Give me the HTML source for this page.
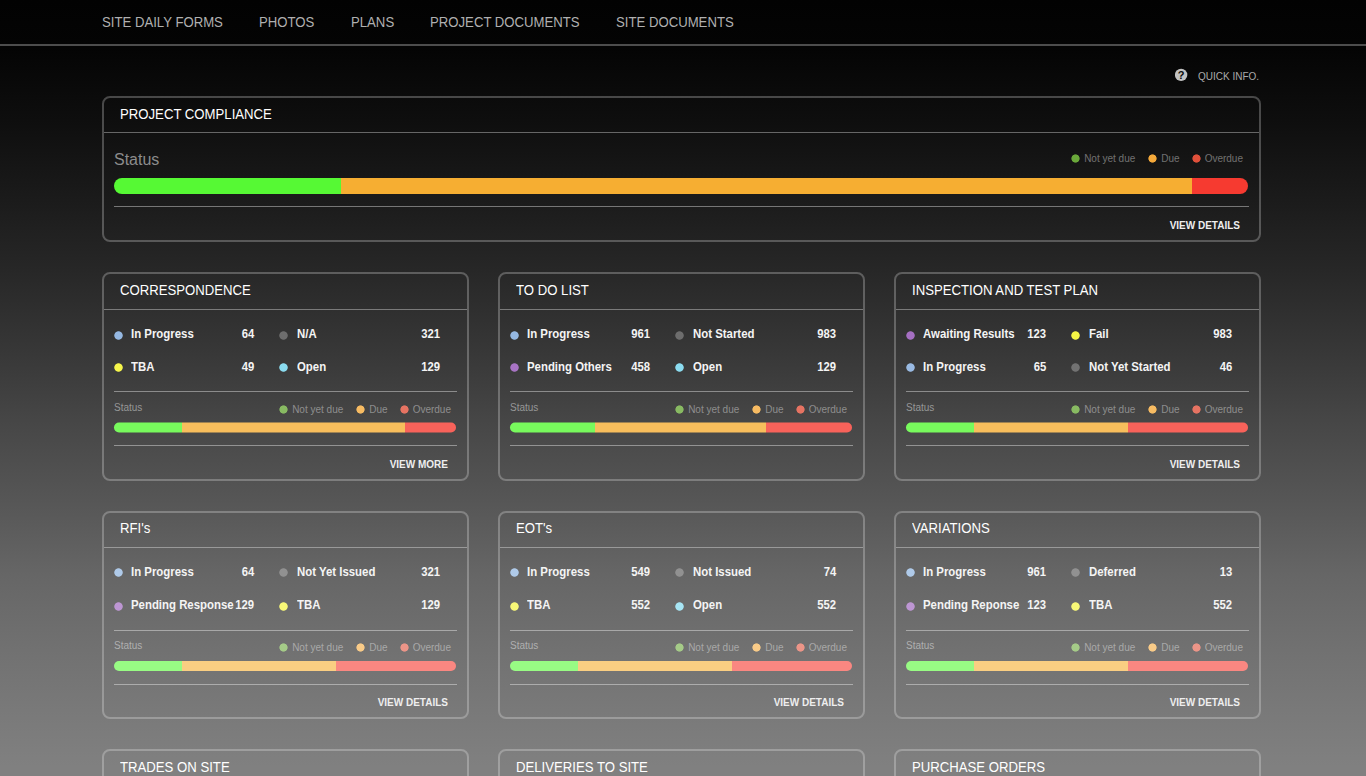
<!DOCTYPE html>
<html lang="en">
<head>
<meta charset="utf-8">
<title>Project Dashboard</title>
<style>
*{box-sizing:border-box;margin:0;padding:0}
html,body{width:1366px;height:776px;overflow:hidden}
body{font-family:"Liberation Sans",Arial,Helvetica,sans-serif;color:#fff;background:#000 linear-gradient(to bottom,#020202 0px,#040404 46px,#060606 60px,#0e0e0e 120px,#1b1b1b 200px,#272727 270px,#373737 350px,#474747 425px,#565656 500px,#666666 575px,#717171 650px,#797979 710px,#808080 766px,#808080 776px) no-repeat;position:relative}
ul{list-style:none}
h3{font-weight:normal}
nav{position:absolute;left:0;top:0;width:1366px;height:46px;border-bottom:2px solid #4d4d4d}
nav a{position:absolute;top:14px;font-size:14px;line-height:16px;color:#b0b0b0;white-space:nowrap;text-decoration:none;transform:scaleX(.94);transform-origin:0 50%}
.quick{position:absolute;left:1175px;top:68px;height:14px;font-size:10px;line-height:12px;color:#aaa;white-space:nowrap}
.quick svg{position:absolute;left:0;top:0}
.quick span{position:absolute;left:23px;top:3px}
.card{position:absolute;width:367px;border:2px solid rgba(255,255,255,.25);border-radius:8px}
.card.r0{height:209px}
.card.r1{height:208px}
.card.r2{height:60px}
.big{left:102px;top:96px;width:1159px;height:146px}
.big .hd{height:35px;padding-top:8px}
.hd{position:absolute;left:0;top:0;right:0;height:36px;border-bottom:1px solid rgba(255,255,255,.36);font-size:14px;line-height:16px;padding:8px 0 0 15.5px;color:#fff;white-space:nowrap}
.hd span{display:inline-block;transform:scaleX(.94);transform-origin:0 50%}
.r1 .hd{height:35px;padding-top:7px}
.it{position:absolute;font-size:12px;line-height:14px;height:14px;font-weight:bold;white-space:nowrap;color:#f4f4f4}
.i0{left:10px;top:53px;width:140px}
.i1{left:175px;top:53px;width:161px}
.i2{left:10px;top:86px;width:140px}
.i3{left:175px;top:86px;width:161px}
.r1 .i0,.r1 .i1{top:52px}
.r1 .i2,.r1 .i3{top:85px}
.dot{position:absolute;left:-1px;top:3px;width:11px;height:11px;background:radial-gradient(circle at 50% 50%,var(--c) 3.8px,transparent 4.6px)}
.lab{position:absolute;left:17px;top:0;transform:scaleX(.95);transform-origin:0 50%}
.i1 .lab,.i3 .lab{left:18px}
.num{position:absolute;right:0;top:0;transform:scaleX(.94);transform-origin:100% 50%}
.dot.b{--c:#8fb0dc}
.dot.g{--c:#727272}
.dot.y{--c:#f6f64a}
.dot.c{--c:#8adcf0}
.dot.p{--c:#a873c4}
.hr{position:absolute;left:10px;right:10px;height:1px;background:rgba(255,255,255,.4)}
.h1{top:117px}
.h2{top:171px}
.r1 .h1{top:117px}
.r1 .h2{top:171px}
.st{position:absolute;left:10px;top:128px;font-size:10px;line-height:12px;color:rgba(255,255,255,.45)}
.lg{position:absolute;right:16px;top:130px;font-size:10px;line-height:12px;color:rgba(255,255,255,.4);white-space:nowrap}
.lg span{margin-left:13px;position:relative;padding-left:13px;display:inline-block}
.lg span:last-child{margin-left:12px}
.lg .d{position:absolute;left:-1px;top:0px;width:11px;height:11px;background:radial-gradient(circle at 50% 50%,var(--c) 3.7px,transparent 4.5px)}
.dg{--c:#8fc25a}
.do{--c:#f5b350}
.dr{--c:#e46a5a}
.bar{position:absolute;left:10px;right:11px;top:148px;height:10px;transform:translateY(.5px);border-radius:5px}
.r1 .st{top:127px}
.r1 .lg{top:129px}
.r1 .bar{top:148px;transform:none}
.vd{position:absolute;right:19px;bottom:8px;font-size:10px;line-height:12px;font-weight:bold;color:#eee;white-space:nowrap}
/* big card */
.big .st{left:10px;top:53px;font-size:16px;line-height:18px;color:#8c8c8c}
.big .lg{right:16px;top:55px}
.big .lg .d{top:0px}
.big .bar{top:80px;height:16px;border-radius:8px;transform:none}
.big .h2{top:108px}
.big .dg{--c:#6fa83c}
.big .do{--c:#f5a93a}
.big .dr{--c:#d9523a}
.r0 .i2 .dot,.r0 .i3 .dot{top:2px}
.r1 .i0 .dot,.r1 .i1 .dot{top:2px}

</style>
</head>
<body>
<nav>
<a style="left:102px">SITE DAILY FORMS</a>
<a style="left:259px">PHOTOS</a>
<a style="left:351px">PLANS</a>
<a style="left:430px">PROJECT DOCUMENTS</a>
<a style="left:616px">SITE DOCUMENTS</a>
</nav>
<div class="quick"><svg width="14" height="14" viewBox="0 0 14 14"><circle cx="6.1" cy="6.9" r="6.2" fill="#c2c2c2"/><text x="6.1" y="10.9" text-anchor="middle" font-family="Liberation Sans,sans-serif" font-weight="bold" font-size="11" fill="#0a0a0a">?</text></svg><span>QUICK INFO.</span></div>
<section class="card big">
<h3 class="hd"><span>PROJECT COMPLIANCE</span></h3>
<div class="st">Status</div>
<div class="lg"><span><i class="d" style="--c:#6aa83a"></i>Not yet due</span><span><i class="d" style="--c:#f5a93a"></i>Due</span><span><i class="d" style="--c:#e0503a"></i>Overdue</span></div>
<div class="bar" style="background:linear-gradient(to right,#56f934 20%,#f6ae32 20% 95.05%,#f63a30 95.05%)"></div>
<div class="hr h2"></div>
<a class="vd">VIEW DETAILS</a>
</section>
<section class="card r0" style="left:102px;top:272px">
<h3 class="hd"><span>CORRESPONDENCE</span></h3>
<ul class="items">
<li class="it i0"><i class="dot" style="--c:#95b8e2"></i><span class="lab">In Progress</span><span class="num">64</span></li>
<li class="it i1"><i class="dot" style="--c:#6d6d6d"></i><span class="lab">N/A</span><span class="num">321</span></li>
<li class="it i2"><i class="dot" style="--c:#f6f64b"></i><span class="lab">TBA</span><span class="num">49</span></li>
<li class="it i3"><i class="dot" style="--c:#8bdcf0"></i><span class="lab">Open</span><span class="num">129</span></li>
</ul>
<div class="hr h1"></div>
<div class="st">Status</div>
<div class="lg"><span><i class="d" style="--c:#88ba62"></i>Not yet due</span><span><i class="d" style="--c:#f7bb62"></i>Due</span><span><i class="d" style="--c:#e67362"></i>Overdue</span></div>
<div class="bar" style="background:linear-gradient(to right,#78fa5d 20%,#f8be5c 20% 85%,#f8625a 85%)"></div>
<div class="hr h2"></div>
<a class="vd">VIEW MORE</a>
</section>
<section class="card r0" style="left:498px;top:272px">
<h3 class="hd"><span>TO DO LIST</span></h3>
<ul class="items">
<li class="it i0"><i class="dot" style="--c:#95b8e2"></i><span class="lab">In Progress</span><span class="num">961</span></li>
<li class="it i1"><i class="dot" style="--c:#6d6d6d"></i><span class="lab">Not Started</span><span class="num">983</span></li>
<li class="it i2"><i class="dot" style="--c:#a874c4"></i><span class="lab">Pending Others</span><span class="num">458</span></li>
<li class="it i3"><i class="dot" style="--c:#8bdcf0"></i><span class="lab">Open</span><span class="num">129</span></li>
</ul>
<div class="hr h1"></div>
<div class="st">Status</div>
<div class="lg"><span><i class="d" style="--c:#88ba62"></i>Not yet due</span><span><i class="d" style="--c:#f7bb62"></i>Due</span><span><i class="d" style="--c:#e67362"></i>Overdue</span></div>
<div class="bar" style="background:linear-gradient(to right,#78fa5d 25%,#f8be5c 25% 75%,#f8625a 75%)"></div>
<div class="hr h2"></div>
</section>
<section class="card r0" style="left:894px;top:272px">
<h3 class="hd"><span>INSPECTION AND TEST PLAN</span></h3>
<ul class="items">
<li class="it i0"><i class="dot" style="--c:#a56fc2"></i><span class="lab">Awaiting Results</span><span class="num">123</span></li>
<li class="it i1"><i class="dot" style="--c:#f5f545"></i><span class="lab">Fail</span><span class="num">983</span></li>
<li class="it i2"><i class="dot" style="--c:#99bae3"></i><span class="lab">In Progress</span><span class="num">65</span></li>
<li class="it i3"><i class="dot" style="--c:#727272"></i><span class="lab">Not Yet Started</span><span class="num">46</span></li>
</ul>
<div class="hr h1"></div>
<div class="st">Status</div>
<div class="lg"><span><i class="d" style="--c:#88ba62"></i>Not yet due</span><span><i class="d" style="--c:#f7bb62"></i>Due</span><span><i class="d" style="--c:#e67362"></i>Overdue</span></div>
<div class="bar" style="background:linear-gradient(to right,#78fa5d 20%,#f8be5c 20% 65%,#f8625a 65%)"></div>
<div class="hr h2"></div>
<a class="vd">VIEW DETAILS</a>
</section>
<section class="card r1" style="left:102px;top:511px">
<h3 class="hd"><span>RFI's</span></h3>
<ul class="items">
<li class="it i0"><i class="dot" style="--c:#afcae9"></i><span class="lab">In Progress</span><span class="num">64</span></li>
<li class="it i1"><i class="dot" style="--c:#919191"></i><span class="lab">Not Yet Issued</span><span class="num">321</span></li>
<li class="it i2"><i class="dot" style="--c:#bd96d3"></i><span class="lab">Pending Response</span><span class="num">129</span></li>
<li class="it i3"><i class="dot" style="--c:#f8f877"></i><span class="lab">TBA</span><span class="num">129</span></li>
</ul>
<div class="hr h1"></div>
<div class="st">Status</div>
<div class="lg"><span><i class="d" style="--c:#a5cb88"></i>Not yet due</span><span><i class="d" style="--c:#f9cb88"></i>Due</span><span><i class="d" style="--c:#ec9588"></i>Overdue</span></div>
<div class="bar" style="background:linear-gradient(to right,#98fb84 20%,#face82 20% 65%,#fa8781 65%)"></div>
<div class="hr h2"></div>
<a class="vd">VIEW DETAILS</a>
</section>
<section class="card r1" style="left:498px;top:511px">
<h3 class="hd"><span>EOT's</span></h3>
<ul class="items">
<li class="it i0"><i class="dot" style="--c:#afcae9"></i><span class="lab">In Progress</span><span class="num">549</span></li>
<li class="it i1"><i class="dot" style="--c:#919191"></i><span class="lab">Not Issued</span><span class="num">74</span></li>
<li class="it i2"><i class="dot" style="--c:#f8f877"></i><span class="lab">TBA</span><span class="num">552</span></li>
<li class="it i3"><i class="dot" style="--c:#a7e5f4"></i><span class="lab">Open</span><span class="num">552</span></li>
</ul>
<div class="hr h1"></div>
<div class="st">Status</div>
<div class="lg"><span><i class="d" style="--c:#a5cb88"></i>Not yet due</span><span><i class="d" style="--c:#f9cb88"></i>Due</span><span><i class="d" style="--c:#ec9588"></i>Overdue</span></div>
<div class="bar" style="background:linear-gradient(to right,#98fb84 20%,#face82 20% 65%,#fa8781 65%)"></div>
<div class="hr h2"></div>
<a class="vd">VIEW DETAILS</a>
</section>
<section class="card r1" style="left:894px;top:511px">
<h3 class="hd"><span>VARIATIONS</span></h3>
<ul class="items">
<li class="it i0"><i class="dot" style="--c:#afcae9"></i><span class="lab">In Progress</span><span class="num">961</span></li>
<li class="it i1"><i class="dot" style="--c:#919191"></i><span class="lab">Deferred</span><span class="num">13</span></li>
<li class="it i2"><i class="dot" style="--c:#bd96d3"></i><span class="lab">Pending Reponse</span><span class="num">123</span></li>
<li class="it i3"><i class="dot" style="--c:#f8f877"></i><span class="lab">TBA</span><span class="num">552</span></li>
</ul>
<div class="hr h1"></div>
<div class="st">Status</div>
<div class="lg"><span><i class="d" style="--c:#a5cb88"></i>Not yet due</span><span><i class="d" style="--c:#f9cb88"></i>Due</span><span><i class="d" style="--c:#ec9588"></i>Overdue</span></div>
<div class="bar" style="background:linear-gradient(to right,#98fb84 20%,#face82 20% 65%,#fa8781 65%)"></div>
<div class="hr h2"></div>
<a class="vd">VIEW DETAILS</a>
</section>
<section class="card r2" style="left:102px;top:749px">
<h3 class="hd"><span>TRADES ON SITE</span></h3>
</section>
<section class="card r2" style="left:498px;top:749px">
<h3 class="hd"><span>DELIVERIES TO SITE</span></h3>
</section>
<section class="card r2" style="left:894px;top:749px">
<h3 class="hd"><span>PURCHASE ORDERS</span></h3>
</section>
</body>
</html>
